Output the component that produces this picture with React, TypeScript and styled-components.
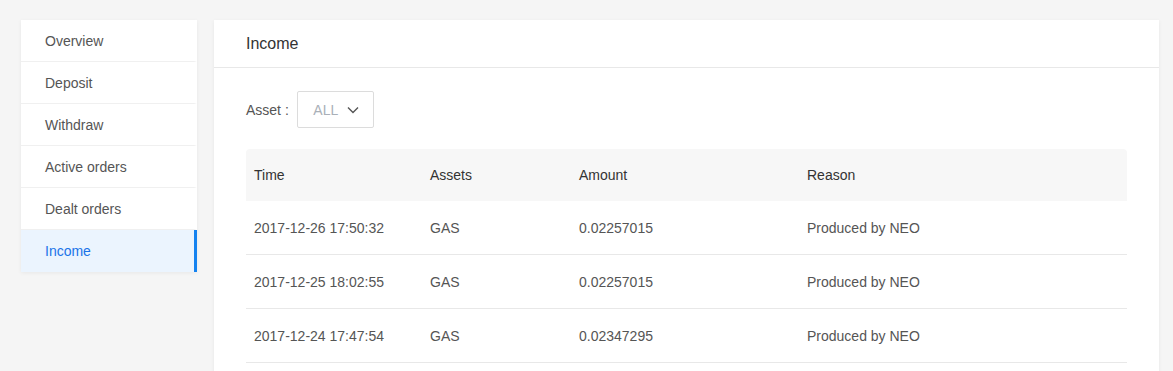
import React from "react";
import styled, { createGlobalStyle } from "styled-components";

const Global = createGlobalStyle`
  html, body { margin: 0; padding: 0; background: #f5f5f5; }
  body { font-family: "Liberation Sans", Arial, sans-serif; font-size: 14px; color: #333; }
`;

const Page = styled.div`
  display: flex;
  align-items: flex-start;
  gap: 17px;
  padding: 20px 14px 0 21px;
  height: 371px;
  box-sizing: border-box;
  overflow: hidden;
`;

const Sidebar = styled.nav`
  width: 176px;
  flex: none;
  background: #fff;
  box-shadow: 0 1px 4px rgba(0, 0, 0, 0.06);
  display: flex;
  flex-direction: column;
`;

const NavItem = styled.div<{ $active?: boolean }>`
  height: 42px;
  box-sizing: border-box;
  display: flex;
  align-items: center;
  padding-left: 24px;
  color: ${(p) => (p.$active ? "#1a73e8" : "#555")};
  background: ${(p) => (p.$active ? "#ebf4fe" : "#fff")};
  border-bottom: ${(p) => (p.$active ? "none" : "1px solid #f0f0f0")};
  border-right: 3px solid ${(p) => (p.$active ? "#1482f0" : "transparent")};
`;

const Panel = styled.section`
  flex: 1;
  background: #fff;
  min-height: 400px;
  box-shadow: 0 1px 4px rgba(0, 0, 0, 0.06);
`;

const PanelHeader = styled.div`
  height: 48px;
  box-sizing: border-box;
  border-bottom: 1px solid #e8e8e8;
  display: flex;
  align-items: center;
  padding-left: 32px;
  font-size: 16px;
  color: #333;
`;

const PanelBody = styled.div`
  padding: 23px 32px 0 32px;
`;

const Filter = styled.div`
  display: flex;
  align-items: center;
  gap: 8px;
  color: #555;
  margin-bottom: 21px;
`;

const Select = styled.div`
  width: 77px;
  height: 37px;
  box-sizing: border-box;
  border: 1px solid #dcdcdc;
  border-radius: 2px;
  display: flex;
  align-items: center;
  justify-content: center;
  gap: 9px;
  color: #aab0b8;
  padding-left: 2px;
`;

const Table = styled.table`
  width: 100%;
  border-collapse: separate;
  border-spacing: 0;
  table-layout: fixed;
`;

const HeadRow = styled.tr`
  background: #f7f7f7;
`;

const Th = styled.th<{ $w?: number }>`
  height: 52px;
  box-sizing: border-box;
  text-align: left;
  font-weight: normal;
  color: #333;
  padding: 0 0 0 8px;
  width: ${(p) => (p.$w ? `${p.$w}px` : "auto")};
  &:first-child { border-top-left-radius: 4px; }
  &:last-child { border-top-right-radius: 4px; }
`;

const Td = styled.td`
  height: 54px;
  box-sizing: border-box;
  padding: 0 0 0 8px;
  color: #555;
  border-bottom: 1px solid #e8e8e8;
`;

const Chevron = () => (
  <svg width="12" height="8" viewBox="0 0 12 8" fill="none">
    <path d="M1 1.5 L6 6.5 L11 1.5" stroke="#555" strokeWidth="1.4" />
  </svg>
);

const nav = ["Overview", "Deposit", "Withdraw", "Active orders", "Dealt orders", "Income"];
const rows = [
  ["2017-12-26 17:50:32", "GAS", "0.02257015", "Produced by NEO"],
  ["2017-12-25 18:02:55", "GAS", "0.02257015", "Produced by NEO"],
  ["2017-12-24 17:47:54", "GAS", "0.02347295", "Produced by NEO"],
];

export default function App() {
  return (
    <>
      <Global />
      <Page>
        <Sidebar>
          {nav.map((n) => (
            <NavItem key={n} $active={n === "Income"}>
              {n}
            </NavItem>
          ))}
        </Sidebar>
        <Panel>
          <PanelHeader>Income</PanelHeader>
          <PanelBody>
            <Filter>
              <span>Asset :</span>
              <Select>
                <span>ALL</span>
                <Chevron />
              </Select>
            </Filter>
            <Table>
              <thead>
                <HeadRow>
                  <Th $w={176}>Time</Th>
                  <Th $w={149}>Assets</Th>
                  <Th $w={228}>Amount</Th>
                  <Th>Reason</Th>
                </HeadRow>
              </thead>
              <tbody>
                {rows.map((r) => (
                  <tr key={r[0]}>
                    {r.map((c, i) => (
                      <Td key={i}>{c}</Td>
                    ))}
                  </tr>
                ))}
              </tbody>
            </Table>
          </PanelBody>
        </Panel>
      </Page>
    </>
  );
}
